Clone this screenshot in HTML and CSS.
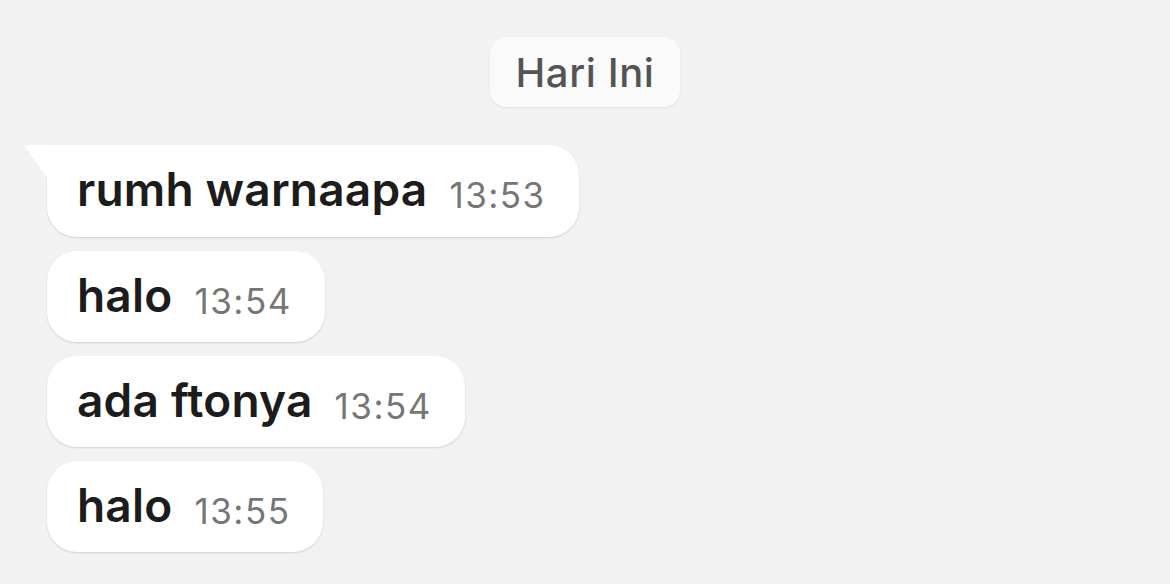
FILE: index.html
```html
<!DOCTYPE html>
<html lang="id">
<head>
<meta charset="utf-8">
<title>Chat</title>
<link rel="stylesheet" href="styles.css">
</head>
<body>
<main class="chat">
  <div class="date-row"><span class="date-pill">Hari Ini</span></div>
  <div class="messages">
    <div class="bubble bubble--first"><span class="text">rumh warnaapa</span><span class="time">13:53</span></div>
    <div class="bubble"><span class="text">halo</span><span class="time">13:54</span></div>
    <div class="bubble"><span class="text">ada ftonya</span><span class="time">13:54</span></div>
    <div class="bubble"><span class="text">halo</span><span class="time">13:55</span></div>
  </div>
</main>
</body>
</html>
```
FILE: styles.css
```css
html, body {
  margin: 0;
  padding: 0;
  background: #f2f2f2;
}
body {
  width: 1170px;
  height: 584px;
  overflow: hidden;
  font-family: "Inter", "Noto Sans", sans-serif;
}
.chat {
  padding-top: 37px;
}
.date-row {
  display: flex;
  justify-content: center;
}
.date-pill {
  display: flex;
  align-items: center;
  justify-content: center;
  width: 190px;
  height: 70px;
  box-sizing: border-box;
  padding-top: 1px;
  background: #fafafa;
  border-radius: 16px;
  box-shadow: 0 1px 2px rgba(0, 0, 0, 0.08);
  color: #545454;
  font-size: 40px;
  font-weight: 500;
  letter-spacing: 0.6px;
}
.messages {
  display: flex;
  flex-direction: column;
  align-items: flex-start;
  gap: 14px;
  margin-top: 38px;
  padding-left: 47px;
}
.bubble {
  position: relative;
  display: flex;
  align-items: baseline;
  gap: 22px;
  height: 91px;
  box-sizing: border-box;
  padding: 17px 33px 0 30px;
  background: #ffffff;
  border-radius: 30px;
  box-shadow: 0 1px 2px rgba(0, 0, 0, 0.14);
}
.bubble--first {
  height: 92px;
  border-top-left-radius: 0;
}
.bubble--first::before {
  content: "";
  position: absolute;
  left: -22px;
  top: 0;
  width: 23px;
  height: 32px;
  background: #ffffff;
  clip-path: path("M0 2 Q0 0 3 0 L23 0 L23 32 L22 32 Z");
}
.text {
  font-size: 46px;
  line-height: 55px;
  font-weight: 600;
  color: #1c1c1c;
  letter-spacing: 0.2px;
}
.time {
  position: relative;
  top: 2px;
  font-size: 35px;
  font-weight: 400;
  color: #767676;
  letter-spacing: 1.5px;
}
```
